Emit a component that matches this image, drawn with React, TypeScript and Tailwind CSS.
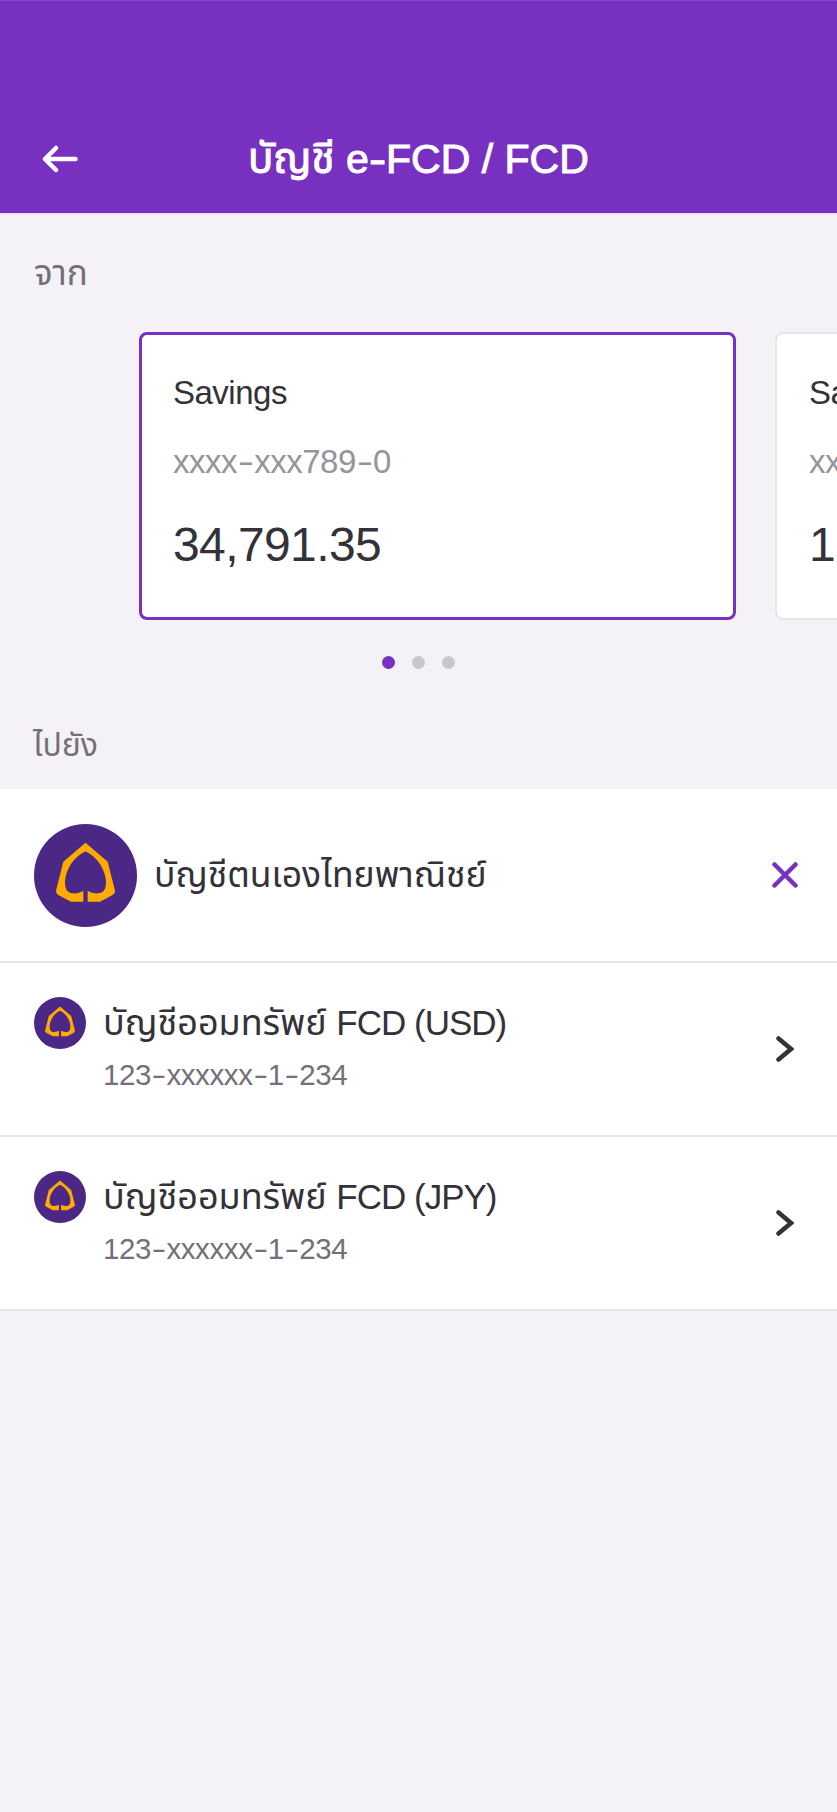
const accounts = [
  { currency: "USD", number: "123-xxxxxx-1-234" },
  { currency: "JPY", number: "123-xxxxxx-1-234" },
];

function BankLogo({ className }: { className: string }) {
  return (
    <svg viewBox="0 0 309 309" className={className}>
      <circle cx="154.5" cy="154.5" r="154.5" fill="#4b2885" />
      <path
        fill="#ffab00"
        d="M154.500 56L221 113L243 200Q244 208 236 213L198 233H161V201C170 205 180 209 193 208C206 207 216 200 216 175C216 140 190 98 154.500 82C119 98 93 140 93 175C93 200 103 207 116 208C129 209 139 205 148 201V233H111L73 213Q65 208 66 200L88 113Z"
      />
    </svg>
  );
}

// Account numbers use a wide hyphen
function AccountNumber({ value }: { value: string }) {
  return (
    <>
      {value.split("").map((char, i) =>
        char === "-" ? (
          <span key={i} className="inline-block w-[0.52em] scale-x-150 text-center">
            -
          </span>
        ) : (
          char
        )
      )}
    </>
  );
}

function Chevron() {
  return (
    <svg viewBox="0 0 18 26" className="h-[26px] w-[18px]" fill="none">
      <path d="M2.500 2.500L15 13L2.500 23.500" stroke="#333238" strokeWidth="4.500" strokeLinecap="round" />
    </svg>
  );
}

export default function App() {
  return (
    <div className="h-[1812px] w-[837px] overflow-hidden bg-[#f4f2f6] font-['Liberation_Sans','Noto_Sans_Thai',sans-serif] text-[#333238]">
      <header className="flex h-[215px] items-center border-t border-b-2 border-t-[#8749c6] border-b-[#ebe5ef] bg-[#7730bf] pt-[104px] pl-[42px] text-white">
        <svg viewBox="0 0 36 28" className="h-7 w-9" fill="none">
          <path d="M14 3L3 14L14 25M3 14H33.500" stroke="currentColor" strokeWidth="4.500" strokeLinecap="round" strokeLinejoin="round" />
        </svg>
        <h1 className="ml-[170px] text-[41px] leading-[52px] whitespace-nowrap [-webkit-text-stroke:1px_white]">
          <span className="text-[42px]">บัญชี</span> e
          <span className="inline-block w-[0.42em] scale-x-125 text-center">-</span>
          FCD / FCD
        </h1>
      </header>

      <h2 className="mt-[38px] mb-[39px] pl-[34px] text-[35px] leading-10 text-[#746f7b]">จาก</h2>

      <div className="flex gap-[39px] pl-[139px]">
        <div className="h-72 w-[597px] shrink-0 rounded-lg border-3 border-[#7730bf] bg-white pt-[38px] pl-[31px]">
          <p className="text-[33px] leading-10 tracking-[-0.5px]">Savings</p>
          <p className="mt-[29px] text-[33px] leading-10 tracking-[-0.5px] text-[#97939c]">
            <AccountNumber value="xxxx-xxx789-0" />
          </p>
          <p className="mt-[33px] text-[48px] leading-[60px] tracking-[-0.6px]">34,791.35</p>
        </div>
        <div className="h-72 w-[597px] shrink-0 rounded-lg border-2 border-[#e8e6eb] bg-white pt-[39px] pl-8">
          <p className="text-[33px] leading-10 tracking-[-0.5px]">Sa</p>
          <p className="mt-[29px] text-[33px] leading-10 tracking-[-0.5px] text-[#97939c]">xx</p>
          <p className="mt-[33px] text-[48px] leading-[60px]">1</p>
        </div>
      </div>

      <div className="mt-9 flex justify-center gap-[17px]">
        <span className="size-[13px] rounded-full bg-[#7730bf]" />
        <span className="size-[13px] rounded-full bg-[#c9c6ce]" />
        <span className="size-[13px] rounded-full bg-[#c9c6ce]" />
      </div>

      <h2 className="mt-[56px] mb-6 pl-[33px] text-[32px] leading-10 text-[#746f7b]">ไปยัง</h2>

      <div className="bg-white">
        <div className="flex h-[174px] items-center border-b-2 border-[#e6e5eb] pr-[38px] pl-[34px]">
          <BankLogo className="size-[103px]" />
          <p className="ml-[17px] flex-1 text-[35.5px] leading-10">บัญชีตนเองไทยพาณิชย์</p>
          <svg viewBox="0 0 27 27" className="size-[27px]" fill="none">
            <path d="M2.500 2.500L23.500 23.500M23.500 2.500L2.500 23.500" stroke="#7730bf" strokeWidth="4.500" strokeLinecap="round" />
          </svg>
        </div>
        {accounts.map((account) => (
          <div key={account.currency} className="flex h-[174px] items-center border-b-2 border-[#e6e5eb] pr-[43px] pl-[34px]">
            <div className="flex flex-1 self-start pt-[34px]">
              <BankLogo className="size-13" />
              <div className="ml-[17px]">
                <p className="text-[35px] leading-[52px] tracking-[-1px]">
                  <span className="text-[36px] tracking-normal">บัญชีออมทรัพย์</span>{" "}
                  <span className="ml-px">FCD ({account.currency})</span>
                </p>
                <p className="mt-[6px] text-[29.5px] leading-10 tracking-[-0.4px] text-[#746f7b]">
                  <AccountNumber value={account.number} />
                </p>
              </div>
            </div>
            <Chevron />
          </div>
        ))}
      </div>
    </div>
  );
}
